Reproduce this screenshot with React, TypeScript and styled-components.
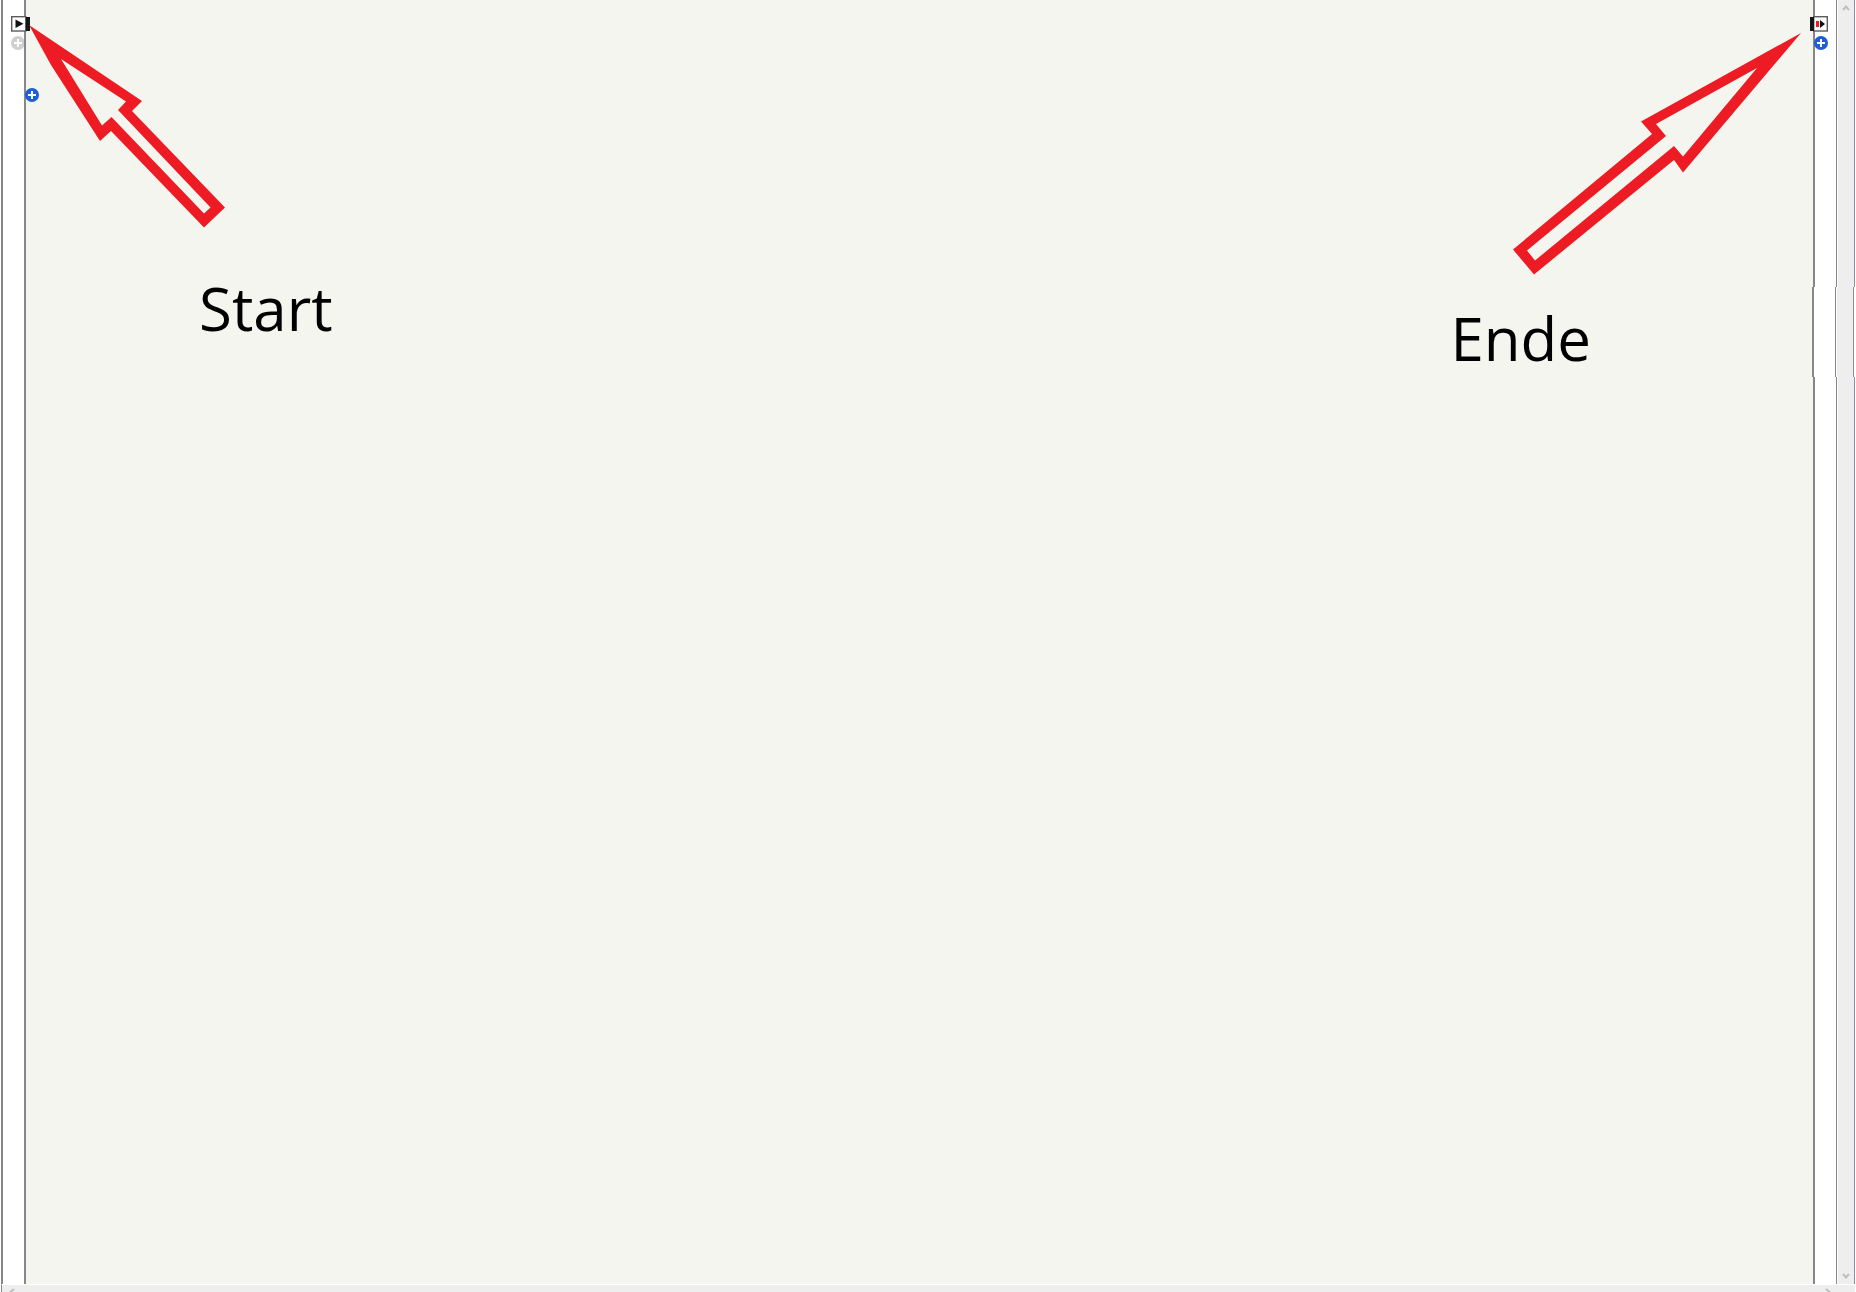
import React from "react";
import styled, { createGlobalStyle } from "styled-components";

const GlobalStyle = createGlobalStyle`
  * { box-sizing: border-box; }
  body { margin: 0; background: #ffffff; overflow: hidden; }
`;

const Page = styled.div`
  height: 100vh;
  display: grid;
  grid-template-columns: 25px minmax(0, 1fr) 43px;
  grid-template-rows: minmax(0, 1fr) 8px;
  overflow: hidden;
  font-family: "Open Sans", "Noto Sans", sans-serif;
`;

const StartRail = styled.div`
  display: flex;
  flex-direction: column;
  align-items: flex-start;
  gap: 4px;
  padding: 16px 0 0 8px;
  margin-left: 1px;
  background: #ffffff;
  border-left: 2px solid #87878a;
`;

const Canvas = styled.main`
  position: relative;
  margin-left: -1px;
  background: #f4f5ee;
  border-left: 2px solid #87878a;
`;

const EndRail = styled.div`
  position: relative;
  display: flex;
  flex-direction: column;
`;

const RailSlice = styled.div<{ $height?: number; $shift?: boolean }>`
  flex: ${(p) => (p.$height ? `0 0 ${p.$height}px` : "1 1 0")};
  display: grid;
  grid-template-columns: 24px 17px;
  margin-left: ${(p) => (p.$shift ? "-1px" : "0")};
`;

const Lane = styled.div`
  background: #ffffff;
  border-left: 2px solid #87878a;
  border-right: 1px solid #87878a;
`;

const Track = styled.div`
  background: #eeeeee;
  border-left: 1px solid #ffffff;
  box-shadow: 1px 0 0 #8c8c9a;
`;

const IconButton = styled.button`
  display: block;
  padding: 0;
  border: 0;
  background: none;
  line-height: 0;
`;

const Pin = styled(IconButton)<{ $left?: number; $right?: number; $top?: number; $bottom?: number }>`
  position: absolute;
  z-index: 2;
  left: ${(p) => (p.$left === undefined ? "auto" : `${p.$left}px`)};
  right: ${(p) => (p.$right === undefined ? "auto" : `${p.$right}px`)};
  top: ${(p) => (p.$top === undefined ? "auto" : `${p.$top}px`)};
  bottom: ${(p) => (p.$bottom === undefined ? "auto" : `${p.$bottom}px`)};
`;

const StartButton = styled(IconButton)`
  position: relative;
  z-index: 2;
`;

const Note = styled.p<{ $left?: number; $right?: number; $top: number }>`
  position: absolute;
  left: ${(p) => (p.$left === undefined ? "auto" : `${p.$left}px`)};
  right: ${(p) => (p.$right === undefined ? "auto" : `${p.$right}px`)};
  top: ${(p) => p.$top}px;
  margin: 0;
  font-size: 60px;
  line-height: 80px;
  color: #000000;
`;

const Arrow = styled.svg<{ $left?: number; $right?: number; $top: number }>`
  position: absolute;
  z-index: 3;
  left: ${(p) => (p.$left === undefined ? "auto" : `${p.$left}px`)};
  right: ${(p) => (p.$right === undefined ? "auto" : `${p.$right}px`)};
  top: ${(p) => p.$top}px;
  pointer-events: none;
`;

const BottomBar = styled.div`
  grid-column: 1 / -1;
  display: flex;
  justify-content: space-between;
  margin: 0 1px;
  padding: 3px 23px 0 6px;
  overflow: hidden;
  background: #eeeeee;
  border-top: 1px solid #ffffff;
  border-left: 1px solid #87878a;
`;

function Plus({ color }: { color: string }) {
  return (
    <svg width="14" height="14" viewBox="0 0 14 14">
      <circle cx="7" cy="7" r="7" fill={color} />
      <path d="M7 3v8M3 7h8" stroke="#fff" strokeWidth="2" />
    </svg>
  );
}

function Chevron({ turn }: { turn: number }) {
  return (
    <svg width="8" height="8" viewBox="0 0 8 8">
      <path
        d="M1 6L4 2.500L7 6"
        transform={`rotate(${turn} 4 4)`}
        fill="none"
        stroke="#bebebe"
        strokeWidth="2"
      />
    </svg>
  );
}

export default function App() {
  return (
    <>
      <GlobalStyle />
      <Page>
        <StartRail>
          <StartButton aria-label="Start">
            <svg width="19" height="16" viewBox="0 0 19 16">
              <rect x="0.700" y="0.700" width="14" height="14.300" fill="#fff" stroke="#5c5c5c" strokeWidth="1.400" />
              <path d="M4.500 3.500v8.500l8-4.250z" fill="#111" />
              <path d="M15 1h4v14h-4z" fill="#16161a" />
            </svg>
          </StartButton>
          <IconButton aria-label="Add input" disabled>
            <Plus color="#cfcfcf" />
          </IconButton>
        </StartRail>
        <Canvas>
          <Pin aria-label="Add element" $left={-1} $top={88}>
            <Plus color="#1d5dd6" />
          </Pin>
          <Arrow $left={3} $top={24} width="197" height="204" viewBox="29 24 197 204">
            <path
              fillRule="evenodd"
              fill="#ed1c24"
              d="M29 25L142 101L132 111L225 207.500L204 227.500L111 131L100 141L51 65ZM61 59L102 125.500L111.500 117L204 213.500L210.500 207.500L118 110L126 101.500Z"
            />
          </Arrow>
          <Note $left={173} $top={268}>Start</Note>
          <Arrow $right={12} $top={32} width="289" height="244" viewBox="1512 32 289 244">
            <path
              fillRule="evenodd"
              fill="#ed1c24"
              d="M1801 33L1683 172.500L1674 160L1534 274.500L1513 249.500L1652 134L1641 121.500ZM1757 68L1656 124L1666 136L1527 250.500L1535 260.500L1674 146L1683 156.500Z"
            />
          </Arrow>
          <Note $right={222} $top={298}>Ende</Note>
        </Canvas>
        <EndRail>
          <RailSlice $height={287}><Lane /><Track /></RailSlice>
          <RailSlice $height={90} $shift><Lane /><Track /></RailSlice>
          <RailSlice><Lane /><Track /></RailSlice>
          <Pin aria-label="Ende" $left={-3} $top={16}>
            <svg width="19" height="16" viewBox="0 0 19 16">
              <rect x="3.700" y="0.700" width="13.600" height="14.300" fill="#fff" stroke="#5c5c5c" strokeWidth="1.400" />
              <path d="M0 1h4v14h-4z" fill="#16161a" />
              <path d="M6 5h3v6h-3z" fill="#f01c24" />
              <path d="M10 4v8l5-4z" fill="#111" />
            </svg>
          </Pin>
          <Pin aria-label="Add output" $left={1} $top={36}>
            <Plus color="#1d5dd6" />
          </Pin>
          <Pin aria-label="Scroll up" $right={6} $top={4}><Chevron turn={0} /></Pin>
          <Pin aria-label="Scroll down" $right={6} $bottom={4}><Chevron turn={180} /></Pin>
        </EndRail>
        <BottomBar>
          <IconButton aria-label="Scroll left"><Chevron turn={-90} /></IconButton>
          <IconButton aria-label="Scroll right"><Chevron turn={90} /></IconButton>
        </BottomBar>
      </Page>
    </>
  );
}
